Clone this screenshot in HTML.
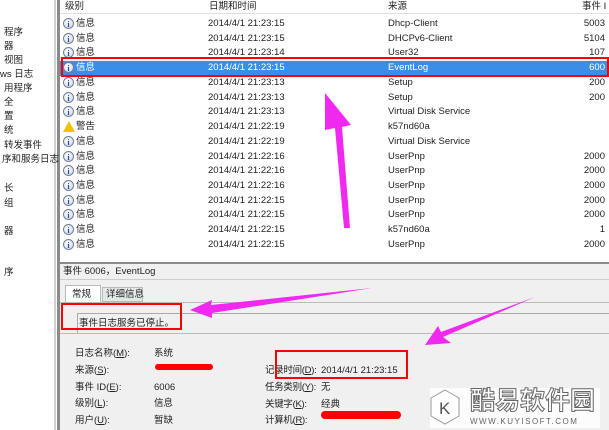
<!DOCTYPE html>
<html><head><meta charset="utf-8"><style>
*{margin:0;padding:0;box-sizing:border-box}
body{width:609px;height:430px;overflow:hidden;background:#fff;font-family:"Liberation Sans","Noto Sans CJK SC",sans-serif;font-size:9.5px;line-height:12px;color:#222;position:relative}
.a{position:absolute;white-space:nowrap}
.ic{position:absolute;width:11px;height:11px;border-radius:50%;border:1px solid #6f7f99;background:radial-gradient(circle at 40% 35%,#fff,#c9d3e3);font:bold 8px/9px "Liberation Serif",serif;color:#1b4fa0;text-align:center}
.row{position:absolute;left:60px;width:549px;height:14.7px}
.row span{position:absolute;top:1px;line-height:12px}
</style></head><body>
<div class="a" style="left:0;top:0;width:55px;height:430px;background:#fff"></div>
<div class="a" style="left:54px;top:0;width:2px;height:430px;background:#d0d0d0"></div>
<div class="a" style="left:57px;top:0;width:3px;height:430px;background:#8a8a8a"></div>
<div class="a" style="left:4px;top:27px">程序</div>
<div class="a" style="left:4px;top:41px">器</div>
<div class="a" style="left:4px;top:55px">视图</div>
<div class="a" style="left:0px;top:69px">ws 日志</div>
<div class="a" style="left:4px;top:83px">用程序</div>
<div class="a" style="left:4px;top:97px">全</div>
<div class="a" style="left:4px;top:111px">置</div>
<div class="a" style="left:4px;top:125px">统</div>
<div class="a" style="left:4px;top:140px">转发事件</div>
<div class="a" style="left:2px;top:154px">序和服务日志</div>
<div class="a" style="left:4px;top:183px">长</div>
<div class="a" style="left:4px;top:198px">组</div>
<div class="a" style="left:4px;top:226px">器</div>
<div class="a" style="left:4px;top:267px">序</div>
<div class="a" style="left:60px;top:0;width:549px;height:14px;background:#fff;border-bottom:1px solid #e0e0e0"></div>
<div class="a" style="left:65px;top:1px">级别</div>
<div class="a" style="left:209px;top:1px">日期和时间</div>
<div class="a" style="left:388px;top:1px">来源</div>
<div class="a" style="left:582px;top:1px">事件 I</div>
<div id="rows"></div>
<script>
var d=[["信息","21:23:15","Dhcp-Client","5003"],["信息","21:23:15","DHCPv6-Client","5104"],["信息","21:23:14","User32","107"],["信息","21:23:15","EventLog","600"],["信息","21:23:13","Setup","200"],["信息","21:23:13","Setup","200"],["信息","21:23:13","Virtual Disk Service",""],["警告","21:22:19","k57nd60a",""],["信息","21:22:19","Virtual Disk Service",""],["信息","21:22:16","UserPnp","2000"],["信息","21:22:16","UserPnp","2000"],["信息","21:22:16","UserPnp","2000"],["信息","21:22:15","UserPnp","2000"],["信息","21:22:15","UserPnp","2000"],["信息","21:22:15","k57nd60a","1"],["信息","21:22:15","UserPnp","2000"]];
var h="";for(var i=0;i<d.length;i++){var y=17+i*14.73,s=i==3;
h+='<div class="row" style="top:'+y+'px;'+(s?'background:#3a8ee6;color:#fff':'')+'">'+
(d[i][0]=="警告"?'<span style="left:3px;top:1px;width:0;height:0;border-left:6px solid transparent;border-right:6px solid transparent;border-bottom:11px solid #f2c200"></span>':'<span class="ic" style="left:3px;top:1px">i</span>')+
'<span style="left:16px">'+d[i][0]+'</span><span style="left:148px">2014/4/1 '+d[i][1]+'</span><span style="left:328px">'+d[i][2]+'</span><span style="right:4px">'+d[i][3]+'</span></div>';}
document.getElementById("rows").innerHTML=h;
</script>
<div class="a" style="left:60px;top:262px;width:549px;height:168px;background:#f0f0f0;border-top:2px solid #8a8a8a"></div>
<div class="a" style="left:63px;top:266px">事件 6006，EventLog</div>
<div class="a" style="left:60px;top:279px;width:549px;height:1px;background:#ccc"></div>
<div class="a" style="left:65px;top:285px;width:36px;height:18px;background:#fff;border:1px solid #bbb;border-bottom:none;padding:3px 6px">常规</div>
<div class="a" style="left:102px;top:287px;width:41px;height:15px;background:#e6e6e6;border:1px solid #bbb;padding:1px 3px">详细信息</div>
<div class="a" style="left:60px;top:302px;width:549px;height:1px;background:#bbb"></div>
<div class="a" style="left:77px;top:313px;width:532px;height:20px;border-top:1px solid #aaa;border-left:1px solid #aaa;padding:4px 1px">事件日志服务已停止。</div>
<div class="a" style="left:60px;top:333px;width:549px;height:1px;background:#bbb"></div>
<div class="a" style="left:75px;top:346px;line-height:16.8px">日志名称(<u>M</u>):<br>来源(<u>S</u>):<br>事件 ID(<u>E</u>):<br>级别(<u>L</u>):<br>用户(<u>U</u>):</div>
<div class="a" style="left:154px;top:346px;line-height:16.8px">系统<br>&nbsp;<br>6006<br>信息<br>暂缺</div>
<div class="a" style="left:265px;top:363px;line-height:16.8px;letter-spacing:-0.3px">记录时间(<u>D</u>):<br>任务类别(<u>Y</u>):<br>关键字(<u>K</u>):<br>计算机(<u>R</u>):</div>
<div class="a" style="left:321px;top:363px;line-height:16.8px">2014/4/1 21:23:15<br>无<br>经典</div>
<div class="a" style="left:155px;top:364px;width:58px;height:6px;background:#f00;border-radius:3px"></div>
<div class="a" style="left:321px;top:411px;width:80px;height:8px;background:#f00;border-radius:4px"></div>
<div class="a" style="left:61px;top:57px;width:548px;height:20px;border:2px solid #f00"></div>
<div class="a" style="left:61px;top:303px;width:121px;height:27px;border:2px solid #f00"></div>
<div class="a" style="left:275px;top:350px;width:133px;height:29px;border:2px solid #f00"></div>
<svg class="a" style="left:0;top:0" width="609" height="430">
<polygon fill="#f028f0" points="325,93 351,125 342,127 350,228 344,228 335,128 325,130"/>
<polygon fill="#f028f0" points="190,310 212,300 211,305 372,288 212,313 212,318"/>
<polygon fill="#f028f0" points="425,345 438,326 441,332 535,297 443,337 451,343"/>
</svg>
<div class="a" style="left:430px;top:388px;width:170px;height:40px;background:rgba(255,255,255,.8)"></div>
<svg class="a" style="left:428px;top:388px" width="34" height="38"><polygon points="17,2 31,10 31,28 17,36 3,28 3,10" fill="#fff" stroke="#999"/><text x="11" y="26" font-family="Liberation Sans" font-size="17" fill="#555">K</text></svg>
<div class="a" style="left:470px;top:386px;font-size:25px;line-height:30px;color:#fff;-webkit-text-stroke:1px #666;font-weight:bold">酷易软件园</div>
<div class="a" style="left:470px;top:416px;font-size:8px;color:#666;letter-spacing:1.5px">WWW.KUYISOFT.COM</div>
</body></html>
